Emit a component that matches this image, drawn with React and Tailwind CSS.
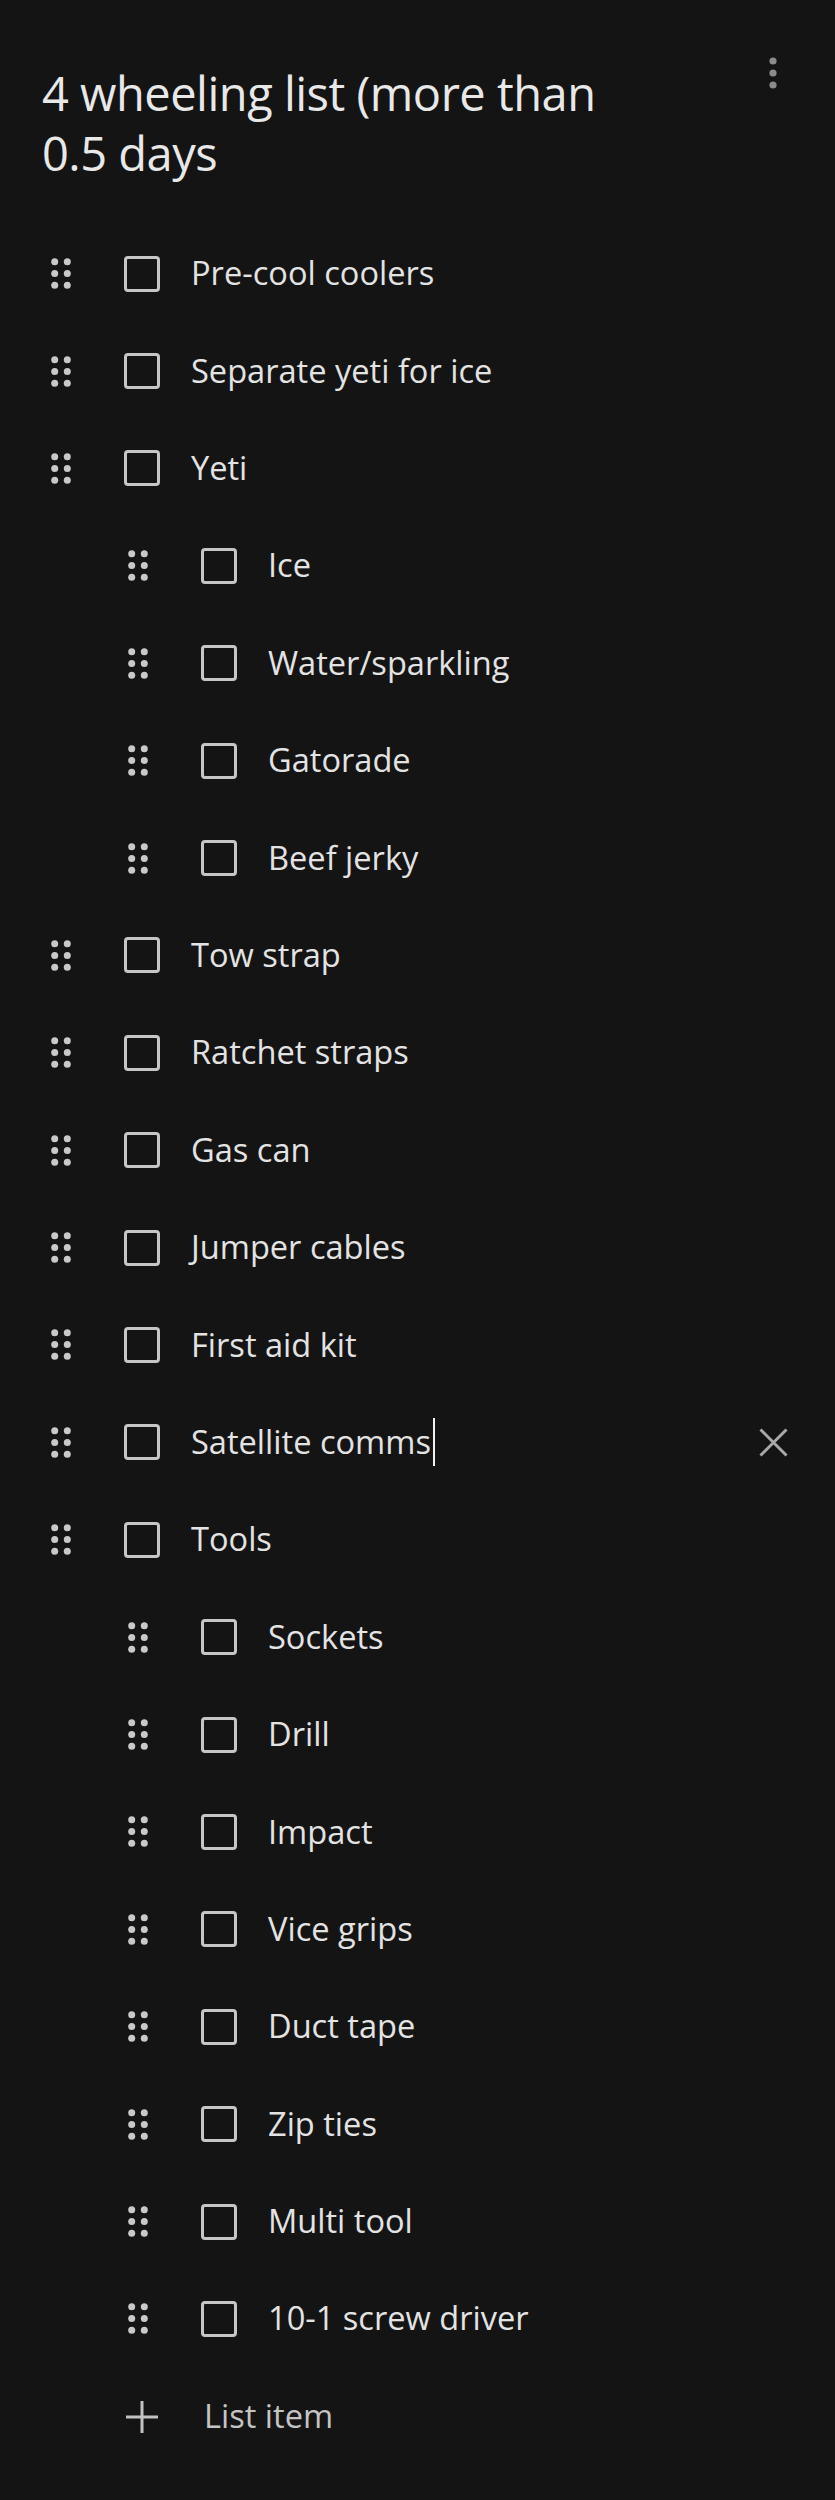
const ITEMS = [
  { text: "Pre-cool coolers" },
  { text: "Separate yeti for ice" },
  { text: "Yeti" },
  { text: "Ice", nested: true },
  { text: "Water/sparkling", nested: true },
  { text: "Gatorade", nested: true },
  { text: "Beef jerky", nested: true },
  { text: "Tow strap" },
  { text: "Ratchet straps" },
  { text: "Gas can" },
  { text: "Jumper cables" },
  { text: "First aid kit" },
  { text: "Satellite comms", focused: true },
  { text: "Tools" },
  { text: "Sockets", nested: true },
  { text: "Drill", nested: true },
  { text: "Impact", nested: true },
  { text: "Vice grips", nested: true },
  { text: "Duct tape", nested: true },
  { text: "Zip ties", nested: true },
  { text: "Multi tool", nested: true },
  { text: "10-1 screw driver", nested: true },
];

function DragHandle() {
  return (
    <svg width="20" height="31" viewBox="0 0 20 31" className="shrink-0 fill-[#c9c9c9]">
      <circle cx="3.7" cy="3.7" r="3.5" />
      <circle cx="16.3" cy="3.7" r="3.5" />
      <circle cx="3.7" cy="15.5" r="3.5" />
      <circle cx="16.3" cy="15.5" r="3.5" />
      <circle cx="3.7" cy="27.3" r="3.5" />
      <circle cx="16.3" cy="27.3" r="3.5" />
    </svg>
  );
}

function Row({ item }) {
  return (
    <div className={`h-[97.4px] flex items-center pr-[47px] ${item.nested ? "pl-[128px]" : "pl-[51px]"}`}>
      <DragHandle />
      <div className="ml-[53px] w-[36px] h-[36px] shrink-0 rounded-[4px] border-[3.5px] border-[#c6c6c6]" />
      <div className="ml-[31px] flex-1 flex items-center text-[32.6px] text-[#e3e3e3]">
        <span>{item.text}</span>
        {item.focused && <span className="ml-[2px] w-[2px] h-[48px] bg-[#f2f2f2]" />}
      </div>
      {item.focused && (
        <svg width="29" height="29" viewBox="0 0 29 29" className="shrink-0 stroke-[#a9a9a9]" strokeWidth="3">
          <path d="M1.5 1.5 L27.5 27.5 M27.5 1.5 L1.5 27.5" />
        </svg>
      )}
    </div>
  );
}

export default function App() {
  return (
    <div className="min-h-[2500px] bg-[#141414]" style={{ fontFamily: '"Open Sans", "Noto Sans", sans-serif' }}>
      {/* Title */}
      <header className="flex items-start justify-between pl-[42px] pr-[58px] pt-[63px] h-[225px]">
        <h1 className="text-[47px] leading-[60px] text-[#e8e8e8] w-[600px] tracking-[-0.5px]">
          4 wheeling list (more than
          <br />
          0.5 days
        </h1>
        <svg width="8" height="32" viewBox="0 0 8 32" className="mt-[-6px] fill-[#8b8b8b]">
          <circle cx="4" cy="4" r="3.6" />
          <circle cx="4" cy="16" r="3.6" />
          <circle cx="4" cy="28" r="3.6" />
        </svg>
      </header>

      <main>
        {ITEMS.map((item, i) => (
          <Row key={i} item={item} />
        ))}
        <div className="h-[98px] flex items-center pl-[126px]">
          <svg width="32" height="32" viewBox="0 0 32 32" className="shrink-0 stroke-[#c2c2c2]" strokeWidth="3">
            <path d="M16 0 V32 M0 16 H32" />
          </svg>
          <span className="ml-[46px] text-[32.6px] text-[#c4c4c4]">List item</span>
        </div>
      </main>
    </div>
  );
}
